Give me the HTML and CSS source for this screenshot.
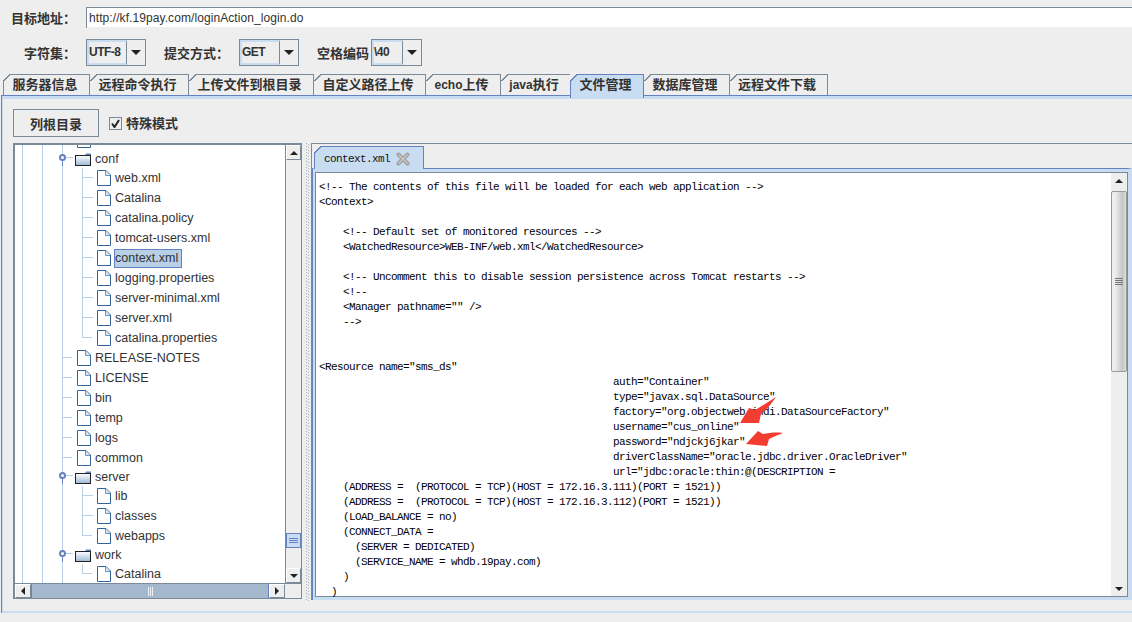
FILE: index.html
```html
<!DOCTYPE html>
<html lang="zh">
<head>
<meta charset="utf-8">
<title>文件管理</title>
<link rel="stylesheet" href="styles.css">
</head>
<body>
<svg class="defs" width="0" height="0" aria-hidden="true">
  <symbol id="file" viewBox="0 0 14 16"><path d="M1 .5H9L13.5 5V15.5H.5V.5Z" fill="#fff" stroke="#33659c"/><path d="M8.5 1V5.5H13" fill="#d7e4f2" stroke="#6f96c2"/></symbol>
  <symbol id="folder" viewBox="0 0 16 13"><path d="M10 2.5 11 .5H16V3H10Z" fill="#6382bf"/><defs><linearGradient id="fg" x1="0" y1="0" x2="0" y2="1"><stop offset="0" stop-color="#fff"/><stop offset="1" stop-color="#9db8d6"/></linearGradient></defs><rect x=".5" y="2.5" width="15" height="10" fill="url(#fg)" stroke="#222"/></symbol>
</svg>
<div class="app">
  <div class="row-url">
    <span class="lbl lbl-url">目标地址：</span>
    <div class="url">http://kf.19pay.com/loginAction_login.do</div>
  </div>
  <div class="row-opts">
    <span class="lbl lbl-charset">字符集：</span>
    <div class="combo combo-a"><span class="combo-val">UTF-8</span><span class="combo-btn"><i class="tri"></i></span></div>
    <span class="lbl lbl-method">提交方式：</span>
    <div class="combo combo-a"><span class="combo-val">GET</span><span class="combo-btn"><i class="tri"></i></span></div>
    <span class="lbl lbl-space">空格编码</span>
    <div class="combo combo-b"><span class="combo-val">\40</span><span class="combo-btn"><i class="tri"></i></span></div>
  </div>
  <div class="tabs">
    <span class="tab t1">服务器信息</span>
    <span class="tab t2">远程命令执行</span>
    <span class="tab t3">上传文件到根目录</span>
    <span class="tab t4">自定义路径上传</span>
    <span class="tab t5"><span class="lat">echo</span>上传</span>
    <span class="tab t6"><span class="lat">java</span>执行</span>
    <span class="tab t7 sel">文件管理</span>
    <span class="tab t8">数据库管理</span>
    <span class="tab t9">远程文件下载</span>
  </div>
  <div class="panel">
    <div class="panel-in">
      <div class="toolbar">
        <button class="btn">列根目录</button>
        <span class="check"><i class="box"><svg width="9" height="9" viewBox="0 0 9 9"><path d="M1 4.5 3.5 8 8 1" fill="none" stroke="#222" stroke-width="2"/></svg></i>特殊模式</span>
      </div>
      <div class="split">
        <div class="tree-pane">
          <div class="tree-view">
            <div class="tree">
              <div class="node d1 file"><b class="hook"></b><svg class="ic"><use href="#file"/></svg></div>
              <div class="node d1 dir"><b class="knob"></b><svg class="fd"><use href="#folder"/></svg><span>conf</span></div>
              <div class="node d2 file"><b class="hook"></b><svg class="ic"><use href="#file"/></svg><span>web.xml</span></div>
              <div class="node d2 file"><b class="hook"></b><svg class="ic"><use href="#file"/></svg><span>Catalina</span></div>
              <div class="node d2 file"><b class="hook"></b><svg class="ic"><use href="#file"/></svg><span>catalina.policy</span></div>
              <div class="node d2 file"><b class="hook"></b><svg class="ic"><use href="#file"/></svg><span>tomcat-users.xml</span></div>
              <div class="node d2 file"><b class="hook"></b><svg class="ic"><use href="#file"/></svg><span class="picked">context.xml</span></div>
              <div class="node d2 file"><b class="hook"></b><svg class="ic"><use href="#file"/></svg><span>logging.properties</span></div>
              <div class="node d2 file"><b class="hook"></b><svg class="ic"><use href="#file"/></svg><span>server-minimal.xml</span></div>
              <div class="node d2 file"><b class="hook"></b><svg class="ic"><use href="#file"/></svg><span>server.xml</span></div>
              <div class="node d2 file last"><b class="hook"></b><svg class="ic"><use href="#file"/></svg><span>catalina.properties</span></div>
              <div class="node d1 file"><b class="hook"></b><svg class="ic"><use href="#file"/></svg><span>RELEASE-NOTES</span></div>
              <div class="node d1 file"><b class="hook"></b><svg class="ic"><use href="#file"/></svg><span>LICENSE</span></div>
              <div class="node d1 file"><b class="hook"></b><svg class="ic"><use href="#file"/></svg><span>bin</span></div>
              <div class="node d1 file"><b class="hook"></b><svg class="ic"><use href="#file"/></svg><span>temp</span></div>
              <div class="node d1 file"><b class="hook"></b><svg class="ic"><use href="#file"/></svg><span>logs</span></div>
              <div class="node d1 file"><b class="hook"></b><svg class="ic"><use href="#file"/></svg><span>common</span></div>
              <div class="node d1 dir"><b class="knob"></b><svg class="fd"><use href="#folder"/></svg><span>server</span></div>
              <div class="node d2 file"><b class="hook"></b><svg class="ic"><use href="#file"/></svg><span>lib</span></div>
              <div class="node d2 file"><b class="hook"></b><svg class="ic"><use href="#file"/></svg><span>classes</span></div>
              <div class="node d2 file last"><b class="hook"></b><svg class="ic"><use href="#file"/></svg><span>webapps</span></div>
              <div class="node d1 dir"><b class="knob"></b><svg class="fd"><use href="#folder"/></svg><span>work</span></div>
              <div class="node d2 file last"><b class="hook"></b><svg class="ic"><use href="#file"/></svg><span>Catalina</span></div>
            </div>
          </div>
          <div class="vbar">
            <span class="sb-btn"><i class="ar up"></i></span>
            <span class="v-gap-a"></span>
            <span class="v-thumb"><i></i><i></i><i></i></span>
            <span class="v-gap-b"></span>
            <span class="sb-btn"><i class="ar down"></i></span>
          </div>
          <div class="hbar">
            <span class="sb-btn"><i class="ar left"></i></span>
            <span class="h-thumb"><i></i><i></i><i></i></span>
            <span class="sb-btn"><i class="ar right"></i></span>
          </div>
          <div class="corner"></div>
        </div>
        <div class="divider"></div>
        <div class="doc-pane">
          <div class="doc-tabs">
            <span class="doc-tab">context.xml<svg class="x" width="14" height="14" viewBox="0 0 14 14"><path d="M2.5 2.5 11.5 11.5M11.5 2.5 2.5 11.5" stroke="#a0a0a0" stroke-width="4" stroke-linecap="round"/><path d="M2.5 2.5 11.5 11.5M11.5 2.5 2.5 11.5" stroke="#c9c9c9" stroke-width="1.4"/></svg></span>
          </div>
          <div class="doc-body">
            <div class="doc-frame">
<pre class="code">&lt;!-- The contents of this file will be loaded for each web application --&gt;
&lt;Context&gt;

    &lt;!-- Default set of monitored resources --&gt;
    &lt;WatchedResource&gt;WEB-INF/web.xml&lt;/WatchedResource&gt;

    &lt;!-- Uncomment this to disable session persistence across Tomcat restarts --&gt;
    &lt;!--
    &lt;Manager pathname="" /&gt;
    --&gt;


&lt;Resource name="sms_ds"
                                                 auth="Container"
                                                 type="javax.sql.DataSource"
                                                 factory="org.objectweb.jndi.DataSourceFactory"
                                                 username="cus_online"
                                                 password="ndjckj6jkar"
                                                 driverClassName="oracle.jdbc.driver.OracleDriver"
                                                 url="jdbc:oracle:thin:@(DESCRIPTION =
    (ADDRESS =  (PROTOCOL = TCP)(HOST = 172.16.3.111)(PORT = 1521))
    (ADDRESS =  (PROTOCOL = TCP)(HOST = 172.16.3.112)(PORT = 1521))
    (LOAD_BALANCE = no)
    (CONNECT_DATA =
      (SERVER = DEDICATED)
      (SERVICE_NAME = whdb.19pay.com)
    )
  )</pre>
              <svg class="marks" width="50" height="60" viewBox="0 0 50 60" aria-hidden="true">
                <path d="M4 33 13 18 19 20C27 15 34 11 40 7 36 13 31 19 25 24L23 33Z" fill="#f23d30"/>
                <path d="M10 54 22 41 27 44C33 43 40 42 47 43 42 45 37 47 33 49L31 56Z" fill="#f23d30"/>
              </svg>
              <div class="doc-vbar">
                <span class="sb-btn plain"><i class="ar up"></i></span>
                <span class="doc-thumb"><i></i><i></i><i></i><i></i></span>
                <span class="doc-gap"></span>
                <span class="sb-btn plain"><i class="ar down"></i></span>
              </div>
            </div>
          </div>
        </div>
      </div>
    </div>
  </div>
</div>
</body>
</html>
```
FILE: styles.css
```css
* { box-sizing: border-box; }
html, body { margin: 0; padding: 0; }
body {
  width: 1132px; height: 622px; overflow: hidden;
  background: #eeeeee; color: #333;
  font-family: "Liberation Sans", "Noto Sans CJK SC", sans-serif;
  font-size: 12px;
}
.defs { display: block; height: 0; }
.app { display: flex; flex-direction: column; height: 622px; }

.lbl { font: 700 13px/20px "Noto Sans CJK SC", sans-serif; color: #333; white-space: nowrap; }
.row-url { display: flex; align-items: center; height: 21px; margin-top: 7px; padding-left: 11px; }
.lbl-url { width: 75px; }
.url {
  flex: 1; height: 21px; line-height: 21px; padding-left: 2px;
  background: #fff; color: #333; font-size: 12px; letter-spacing: .08px;
  border-top: 1px solid #7a8a99; border-left: 1px solid #7a8a99;
  box-shadow: inset 0 -1px 0 #eee;
}

.row-opts { display: flex; align-items: center; height: 27px; margin-top: 11px; }
.lbl-charset { width: 62px; margin-left: 24px; }
.lbl-method { width: 75px; margin-left: 18px; }
.lbl-space { width: 54px; margin-left: 18px; }
.combo { display: flex; height: 27px; border: 1px solid #7a8a99; background: #eee; }
.combo-a { width: 60px; }
.combo-b { width: 51px; }
.combo-val {
  flex: 1; border: 2px solid #c8ddf2; border-right: 1px solid #7a8a99;
  font: 700 12px/21px "Liberation Sans", sans-serif; letter-spacing: -.5px; color: #333;
}
.combo-btn { width: 18px; display: flex; align-items: center; justify-content: center; }
.tri { width: 0; height: 0; border: 5px solid transparent; border-top: 5px solid #222; border-bottom: 0; }

.tabs { display: flex; height: 21px; margin-top: 8px; padding-left: 3px; position: relative; z-index: 2; }
.tab {
  position: relative; display: block; height: 21px; padding-right: 3px;
  border-top: 1px solid #7a8a99; border-right: 1px solid #7a8a99;
  font: 700 13px/18px "Noto Sans CJK SC", sans-serif; color: #333;
  text-align: center; white-space: nowrap; background: #eee;
}
.tab::before {
  content: ""; position: absolute; left: 0; top: -1px; width: 7px; height: 7px;
  background: linear-gradient(135deg, #eee 46%, #7a8a99 46%, #7a8a99 58%, #eee 58%);
}
.lat { font: 700 12px "Liberation Sans", sans-serif; }
.t1 { width: 87px; border-left: 1px solid #7a8a99; }
.t1::before { left: -1px; }
.t2 { width: 99px; }
.t3 { width: 125px; }
.t4 { width: 112px; }
.t5 { width: 75px; }
.t6 { width: 70px; }
.t7 { width: 73px; }
.t8 { width: 86px; }
.t9 { width: 98px; }
.tab.sel { background: #c8ddf2; height: 24px; border-color: #6382bf; border-left: 1px solid #6382bf; margin-left: -1px; width: 74px; }
.tab.sel::before { left: -1px; background: linear-gradient(135deg, #eee 46%, #6382bf 46%, #6382bf 58%, #c8ddf2 58%); }

.panel { height: 518px; margin-left: 1px; border-top: 1px solid #6382bf; border-left: 1px solid #6382bf; }
.panel-in { height: 517px; border-top: 3px solid #c8ddf2; border-left: 1px solid #c8ddf2; border-bottom: 2px solid #c8ddf2; padding: 10px 0 0 10px; }

.toolbar { display: flex; align-items: center; height: 28px; }
.btn {
  width: 86px; height: 28px; padding: 0; background: #eee;
  border: 1px solid #7a8a99; color: #333;
  font: 700 13px "Noto Sans CJK SC", sans-serif;
}
.check { display: flex; align-items: center; margin-left: 10px; font: 700 13px/20px "Noto Sans CJK SC", sans-serif; color: #333; }
.box { width: 13px; height: 13px; margin-right: 4px; border: 1px solid #7a8a99; background: #eee; display: flex; align-items: center; justify-content: center; }

.split { display: flex; height: 458px; margin-top: 6px; }
.tree-pane {
  width: 289px; height: 456px; background: #fff;
  border: 2px solid #7a8a99; border-right-width: 1px; border-bottom-width: 1px;
  display: grid; grid-template-columns: 271px 15px; grid-template-rows: 438px 15px;
}
.tree-view {
  overflow: hidden; border-right: 1px solid #7a8a99;
  background:
    linear-gradient(#b8cfe5, #b8cfe5) 7px 0 / 1px 100% no-repeat,
    linear-gradient(#b8cfe5, #b8cfe5) 27px 0 / 1px 100% no-repeat,
    linear-gradient(#b8cfe5, #b8cfe5) 47px 0 / 1px 100% no-repeat,
    #fff;
}
.tree { margin-top: -15px; }
.node { position: relative; display: flex; align-items: center; height: 20px; white-space: nowrap; color: #333; font-size: 12.5px; }
.node.dir { height: 18px; }
.d1.file { padding-left: 62px; }
.d2.file { padding-left: 82px; }
.d1.dir { padding-left: 60px; }
.ic { width: 14px; height: 16px; flex: none; margin-right: 3px; }
.fd { width: 16px; height: 13px; flex: none; margin-right: 3px; }
.node span { padding: 1px; }
.hook { position: absolute; top: 0; bottom: 0; width: 10px; }
.d1 .hook { left: 47px; }
.d2 .hook { left: 67px; }
.hook::after { content: ""; position: absolute; left: 0; top: 9px; width: 10px; height: 1px; background: #b8cfe5; }
.d2 .hook { border-left: 1px solid #b8cfe5; }
.d2.last .hook { border-left: 0; }
.d2.last .hook::before { content: ""; position: absolute; left: 0; top: 0; width: 1px; height: 10px; background: #b8cfe5; }
.knob { position: absolute; left: 44px; top: 4px; width: 7px; height: 7px; border: 2px solid #6382bf; border-radius: 50%; background: #fff; }
.knob::before { content: ""; position: absolute; left: 1px; top: 3px; width: 1px; height: 7px; background: #6382bf; }
.knob::after { content: ""; position: absolute; left: 5px; top: 1px; width: 7px; height: 1px; background: #b8cfe5; }
.node .picked { background: #b8cfe5; border: 1px solid #6382bf; line-height: 17px; padding: 0 3px 0 0; }

.vbar { display: flex; flex-direction: column; background: #eee; }
.sb-btn { width: 15px; height: 15px; flex: none; display: flex; align-items: center; justify-content: center; background: #eee; border: 1px solid #fff; border-right-color: #7a8a99; border-bottom-color: #7a8a99; }
.sb-btn.plain { border: 0; width: 16px; }
.ar { width: 0; height: 0; border: 4px solid transparent; }
.ar.up { border-bottom: 4px solid #222; border-top: 0; }
.ar.down { border-top: 4px solid #222; border-bottom: 0; }
.ar.left { border-right: 4px solid #222; border-left: 0; }
.ar.right { border-left: 4px solid #222; border-right: 0; }
.v-gap-a { height: 373px; flex: none; }
.v-gap-b { flex: 1; }
.v-thumb { height: 15px; flex: none; background: #c8ddf2; border: 1px solid #6382bf; display: flex; flex-direction: column; align-items: center; justify-content: center; gap: 1px; }
.v-thumb i { width: 9px; height: 1px; background: #6382bf; }
.hbar { display: flex; border-top: 1px solid #7a8a99; background: #eee; }
.hbar .sb-btn { height: 14px; width: 16px; }
.h-thumb { width: 238px; background: #a3b8cc; border-left: 1px solid #6382bf; border-right: 1px solid #6382bf; display: flex; align-items: center; justify-content: center; gap: 1px; }
.h-thumb i { width: 1px; height: 9px; background: #eef3f8; }
.corner { background: #eee; border-top: 1px solid #7a8a99; }

.divider {
  width: 9px;
  background:
    repeating-linear-gradient(#a8b0b8 0 1px, #eee 1px 3px) 4px 0 / 1px 100% no-repeat,
    repeating-linear-gradient(#a8b0b8 0 1px, #eee 1px 3px) 6px 1px / 1px 100% no-repeat;
}

.doc-pane { flex: 1; height: 457px; border-top: 1px solid #7a8a99; border-left: 1px solid #7a8a99; display: flex; flex-direction: column; }
.doc-tabs { height: 24px; padding: 2px 0 0 2px; display: flex; }
.doc-tab {
  position: relative; width: 110px; height: 23px; display: flex; align-items: center; padding: 1px 0 0 9px;
  background: #c8ddf2; border: 1px solid #6382bf; border-bottom: 0;
  color: #111; white-space: nowrap;
  font: 11px/20px "Liberation Mono", monospace; letter-spacing: -.6px;
}
.doc-tab::before {
  content: ""; position: absolute; left: -1px; top: -1px; width: 7px; height: 7px;
  background: linear-gradient(135deg, #eee 46%, #6382bf 46%, #6382bf 58%, #c8ddf2 58%);
}
.x { margin-left: 6px; }
.doc-body {
  flex: 1; min-height: 0; margin-left: 1px; padding-top: 3px; background: #c8ddf2;
  border-top: 1px solid #6382bf; border-left: 2px solid #c8ddf2;
  border-right: 4px solid #c8ddf2; border-bottom: 3px solid #c8ddf2;
  box-shadow: -1px 0 0 #6382bf;
}
.doc-frame { position: relative; height: 100%; background: #fff; border: 1px solid #7a8a99; display: flex; justify-content: flex-end; }
.code {
  position: absolute; left: 3px; top: 7px; margin: 0;
  font: 11px/15px "Liberation Mono", monospace; letter-spacing: -.6px; color: #000;
}
.marks { position: absolute; left: 420px; top: 217px; }
.doc-vbar { width: 16px; display: flex; flex-direction: column; background: #eee; position: relative; }
.doc-thumb { height: 181px; flex: none; margin-top: 3px; border: 1px solid #9a9a9a; border-radius: 2px; background: linear-gradient(90deg, #f0f0f0, #ececec 25%, #c6c6c6 75%, #dedede); display: flex; flex-direction: column; align-items: center; justify-content: center; gap: 1px; }
.doc-thumb i { width: 8px; height: 1px; background: #777; }
.doc-gap { flex: 1; }
```
